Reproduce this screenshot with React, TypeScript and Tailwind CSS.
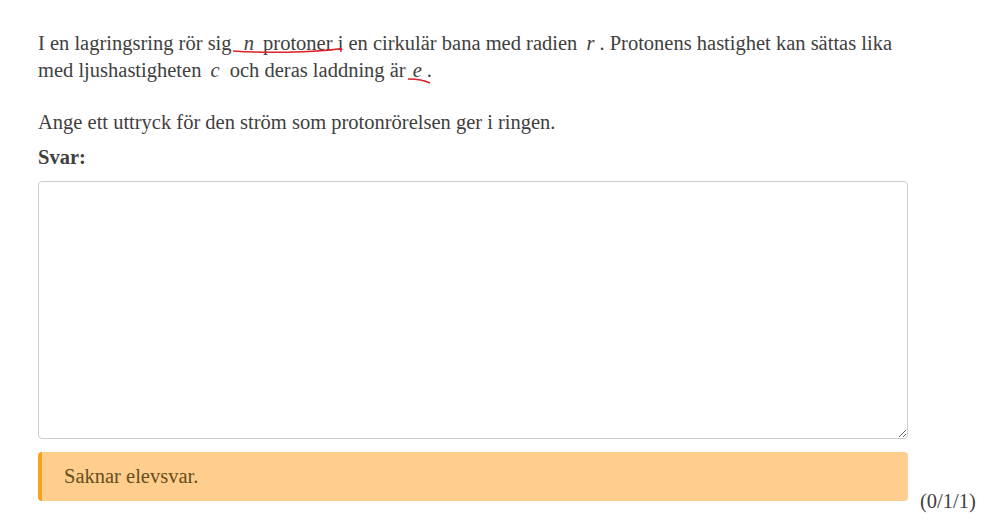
import React from "react";

const M = ({ children }: { children: React.ReactNode }) => (
  <span className="italic ml-[4px] mr-[5px]">{children}</span>
);

export default function App() {
  return (
    <div className="relative min-h-[529px] w-[998px] bg-white text-[#404040] text-[20.5px] leading-[27px]" style={{ fontFamily: '"Liberation Serif", "Times New Roman", serif' }}>
      <div className="flex items-end pl-[38px] pt-[30px]">
        <div className="w-[870px]">
          <p>
            I en lagringsring rör sig{" "}
            <span className="relative">
              <span className="italic ml-[7px] mr-[4px]">n</span> protoner i
              <svg className="pointer-events-none absolute left-[-5px] top-[16px]" width="116" height="10">
                <path d="M1 3 C 30 5, 80 5, 110 0.5" stroke="#e0202a" strokeWidth="1.6" fill="none" />
                <path d="M109 0 L 109 4" stroke="#e0202a" strokeWidth="1.4" fill="none" />
              </svg>
            </span>{" "}
            en cirkulär bana med radien <M>r</M>. Protonens hastighet kan sättas lika med ljushastigheten <M>c</M> och deras laddning är
            <span className="relative">
              <span className="italic ml-[7px] mr-[5px]">e</span>
              <svg className="pointer-events-none absolute left-[1px] top-[17px]" width="30" height="10">
                <path d="M1 3 C 9 3, 17 4, 23 7" stroke="#e0202a" strokeWidth="1.6" fill="none" />
              </svg>
            </span>.
          </p>
          <p className="mt-[25px]">Ange ett uttryck för den ström som protonrörelsen ger i ringen.</p>
          <p className="mt-[8px] font-bold">Svar:</p>
          <textarea className="mt-[10px] block h-[258px] w-[870px] rounded-[4px] border border-[#cccccc] bg-white" />
          <div className="mt-[13px] flex h-[49px] items-center rounded-[4px] border-l-[4px] border-[#f9a11b] bg-[#ffcd8c] pl-[22px] text-[#654d20]">
            Saknar elevsvar.
          </div>
        </div>
        <div className="ml-[12px] translate-y-[14px] text-[#404040]">(0/1/1)</div>
      </div>
    </div>
  );
}
